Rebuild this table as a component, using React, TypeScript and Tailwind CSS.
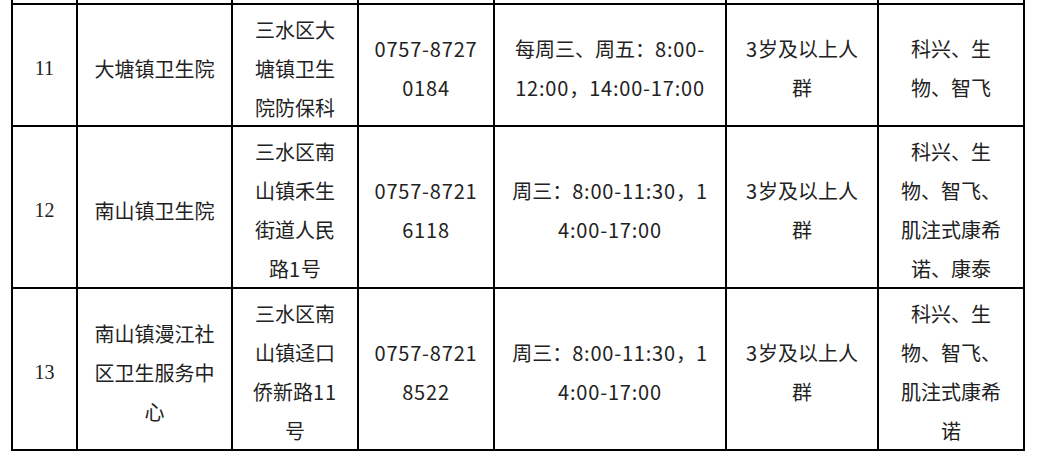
const cjk = "font-['Noto_Sans_CJK_SC','Noto_Sans',sans-serif]";

type Row = {
  no: string;
  name: string[];
  addr: string[];
  phone: string[];
  time: string[];
  people: string[];
  vaccine: string[];
};

const rows: Row[] = [
  {
    no: "11",
    name: ["大塘镇卫生院"],
    addr: ["三水区大", "塘镇卫生", "院防保科"],
    phone: ["0757-8727", "0184"],
    time: ["每周三、周五：8:00-", "12:00，14:00-17:00"],
    people: ["3岁及以上人", "群"],
    vaccine: ["科兴、生", "物、智飞"],
  },
  {
    no: "12",
    name: ["南山镇卫生院"],
    addr: ["三水区南", "山镇禾生", "街道人民", "路1号"],
    phone: ["0757-8721", "6118"],
    time: ["周三：8:00-11:30，1", "4:00-17:00"],
    people: ["3岁及以上人", "群"],
    vaccine: ["科兴、生", "物、智飞、", "肌注式康希", "诺、康泰"],
  },
  {
    no: "13",
    name: ["南山镇漫江社", "区卫生服务中", "心"],
    addr: ["三水区南", "山镇迳口", "侨新路11", "号"],
    phone: ["0757-8721", "8522"],
    time: ["周三：8:00-11:30，1", "4:00-17:00"],
    people: ["3岁及以上人", "群"],
    vaccine: ["科兴、生", "物、智飞、", "肌注式康希", "诺"],
  },
];

// digits in the reference font run a little wider than Noto's
const Line = ({ text }: { text: string }) => (
  <div className="leading-[39px] whitespace-nowrap">
    {text.split(/([0-9:\-]+)/).map((part, i) =>
      /^[0-9:\-]+$/.test(part) ? (
        <span key={i} className="tracking-[0.8px]">
          {part}
        </span>
      ) : (
        <span key={i}>{part}</span>
      )
    )}
  </div>
);

const Cell = ({ lines }: { lines: string[] }) => (
  <div className={`bg-white flex flex-col items-center justify-center pt-[6px] text-[20px] text-[#222] ${cjk}`}>
    {lines.map((l, i) => (
      <Line key={i} text={l} />
    ))}
  </div>
);

export default function App() {
  return (
    <div className="w-[1040px] h-[467px] bg-white pl-[11px]">
      <div className="grid w-[1014px] bg-black gap-[2px] px-[2px] pb-[2px] grid-cols-[63px_153px_124px_134px_230px_150px_144px] grid-rows-[3px_120px_160px_160px]">
        {/* tail of the row above */}
        {Array.from({ length: 7 }).map((_, i) => (
          <div key={i} className="bg-white" />
        ))}
        {rows.map((r) => (
          <>
            <div key={r.no + "n"} className="bg-white flex items-center justify-center pt-[6px] text-[20px] text-[#222] font-['Liberation_Serif',serif]">
              {r.no}
            </div>
            <Cell key={r.no + "a"} lines={r.name} />
            <Cell key={r.no + "b"} lines={r.addr} />
            <Cell key={r.no + "c"} lines={r.phone} />
            <Cell key={r.no + "d"} lines={r.time} />
            <Cell key={r.no + "e"} lines={r.people} />
            <Cell key={r.no + "f"} lines={r.vaccine} />
          </>
        ))}
      </div>
    </div>
  );
}
